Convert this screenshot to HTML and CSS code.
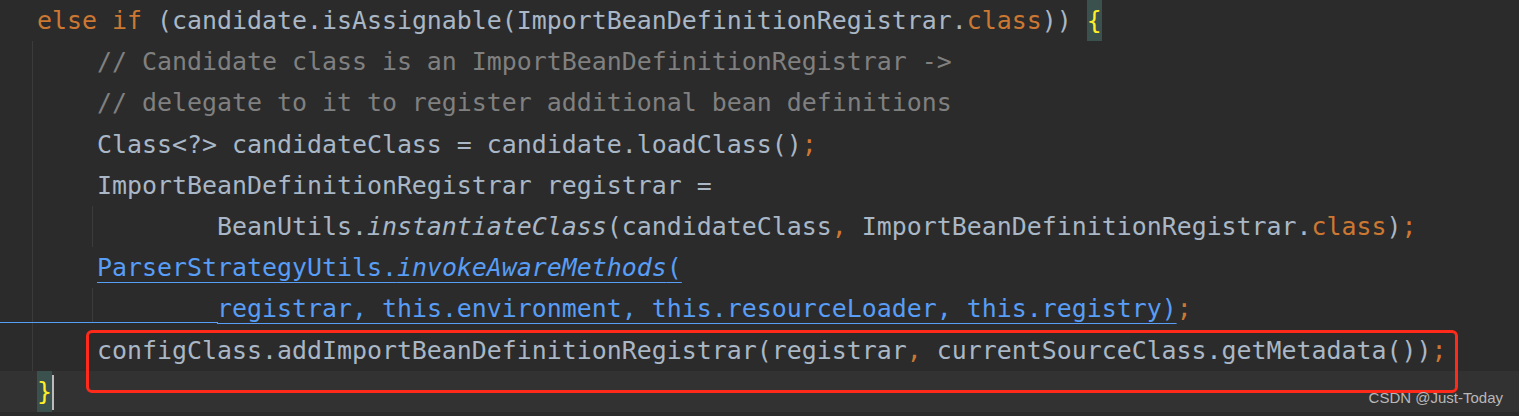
FILE: index.html
```html
<!DOCTYPE html>
<html lang="en">
<head>
    <meta charset="UTF-8">
    <title>ConfigurationClassParser</title>
    <link rel="stylesheet" href="styles.css">
</head>
<body>
    <div class="editor">
        <div class="line"><span class="kw">else if</span> (candidate.isAssignable(ImportBeanDefinitionRegistrar.<span class="kw">class</span>)) <span class="brace">{</span></div>
        <div class="block">
            <div class="line"><span class="cm">    // Candidate class is an ImportBeanDefinitionRegistrar -&gt;</span></div>
            <div class="line"><span class="cm">    // delegate to it to register additional bean definitions</span></div>
            <div class="line">    Class&lt;?&gt; candidateClass = candidate.loadClass()<span class="kw">;</span></div>
            <div class="line">    ImportBeanDefinitionRegistrar registrar =</div>
            <div class="line cont">            BeanUtils.<i>instantiateClass</i>(candidateClass<span class="kw">,</span> ImportBeanDefinitionRegistrar.<span class="kw">class</span>)<span class="kw">;</span></div>
            <div class="line">    <span class="link">ParserStrategyUtils.<i>invokeAwareMethods</i>(</span></div>
            <div class="line lead">            <span class="link">registrar, this.environment, this.resourceLoader, this.registry)</span><span class="kw">;</span></div>
            <div class="line">    configClass.addImportBeanDefinitionRegistrar(registrar<span class="kw">,</span> currentSourceClass.getMetadata())<span class="kw">;</span></div>
        </div>
        <div class="line current"><span class="brace">}</span><span class="caret"></span></div>

        <div class="mark"></div>
        <div class="watermark">CSDN @Just-Today</div>
    </div>
</body>
</html>
```

FILE: styles.css
```css
html, body {
    margin: 0;
    background: #2b2b2b;
}
.editor {
    position: relative;
    height: 416px;
    overflow: hidden;
    font-family: "DejaVu Sans Mono", "Liberation Mono", monospace;
    font-size: 24.92px;
    line-height: 41.2px;
    color: #a9b7c6;
}
.line {
    white-space: pre;
    padding-left: 37px;
    height: 41.2px;
}
.block {
    background: linear-gradient(#3b3b3b, #3b3b3b) no-repeat 32px 0 / 1px 100%;
}
.cont {
    background: linear-gradient(#3b3b3b, #3b3b3b) no-repeat 92px 0 / 1px 100%;
}
.lead {
    background:
        linear-gradient(#589df6, #589df6) no-repeat 0 34px / 218px 1px,
        linear-gradient(#3b3b3b, #3b3b3b) no-repeat 92px 0 / 1px 35px;
}
.current {
    background: #323232;
}
.kw {
    color: #cc7832;
}
.cm {
    color: #808080;
}
i {
    font-style: italic;
}
.link {
    color: #589df6;
    text-decoration: underline;
    text-decoration-thickness: 1px;
    text-underline-offset: 6px;
}
.brace {
    display: inline-block;
    vertical-align: top;
    height: 41px;
    color: #ffef28;
    background: #3b514d;
}
.caret {
    display: inline-block;
    vertical-align: top;
    width: 2px;
    height: 35px;
    margin-top: 4px;
    background: #bbbbbb;
}
.mark {
    position: absolute;
    left: 86px;
    top: 330px;
    width: 1366px;
    height: 57px;
    border: 3px solid #ff2a1a;
    border-radius: 6px;
}
.watermark {
    position: absolute;
    right: 16px;
    bottom: 8px;
    font-family: "Liberation Sans", Arial, sans-serif;
    font-size: 15px;
    line-height: 20px;
    color: #b8b8b8;
}
```
